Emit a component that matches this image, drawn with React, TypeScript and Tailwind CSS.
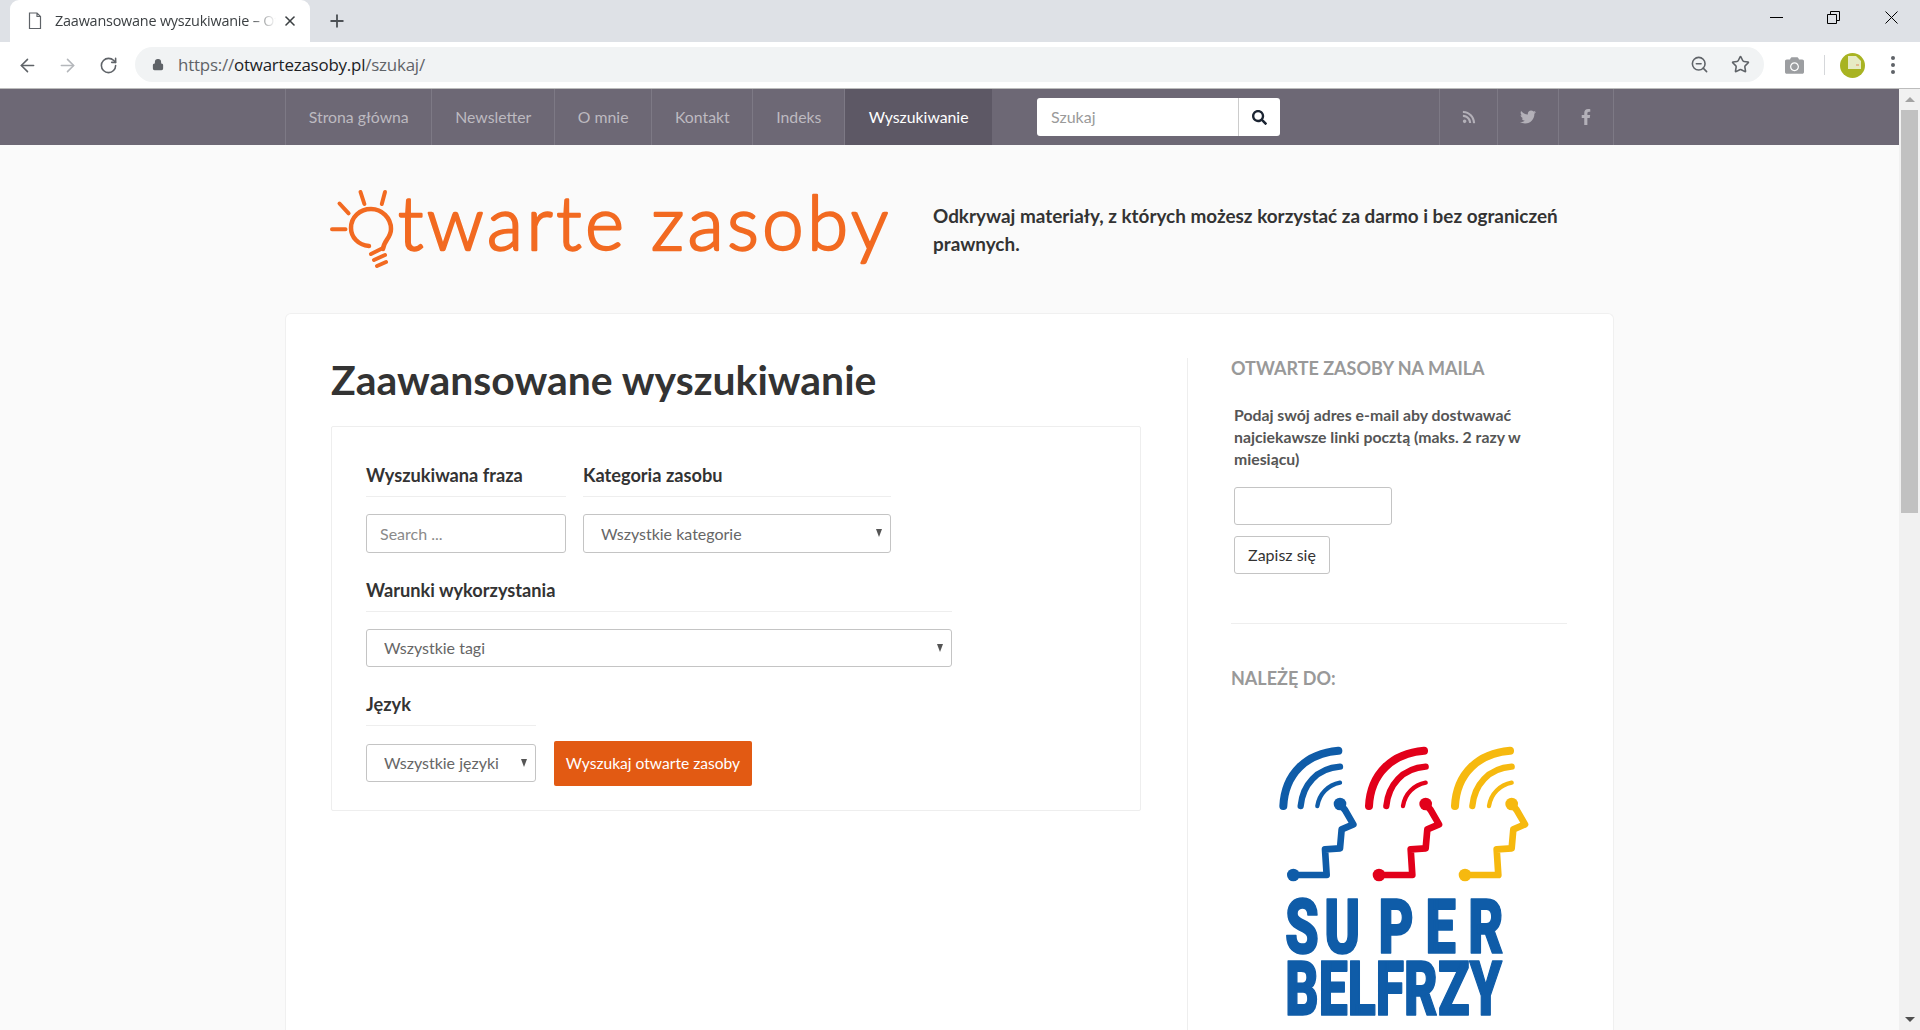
import { ArrowLeft, ArrowRight, Lock, Plus, RotateCw, Star, X, ZoomOut } from "lucide-react"
import { FaCamera, FaFacebookF, FaRss, FaSearch, FaTwitter } from "react-icons/fa"

const navItems = ["Strona główna", "Newsletter", "O mnie", "Kontakt", "Indeks"]

function Head({ color, dx }: { color: string; dx: number }) {
  return (
    <g transform={`translate(${dx} 0)`} fill="none" stroke={color} strokeLinecap="round" strokeLinejoin="round">
      <path d="M70 228C75 130 140 70 235 62" strokeWidth="24" />
      <path d="M122 228C128 165 170 115 240 110" strokeWidth="19" />
      <path d="M172 228C178 190 205 165 240 158" strokeWidth="13" />
      <path d="M240 222L255 240L280 283L245 298L240 355L195 358L200 435H100" strokeWidth="20" />
      <circle cx="240" cy="222" r="19" fill={color} stroke="none" />
      <circle cx="100" cy="435" r="19" fill={color} stroke="none" />
    </g>
  )
}

function SuperBelfrzy() {
  return (
    <svg viewBox="0 0 870 900" className="w-[290px] h-[300px] block">
      <Head color="#0f5ca8" dx={0} />
      <Head color="#e2001a" dx={257} />
      <Head color="#f6b90f" dx={515} />
      <g fontFamily="Roboto, sans-serif" fontWeight="900" fontSize="226" fill="#0f5ca8" stroke="#0f5ca8" strokeWidth="5" strokeLinejoin="round">
        <text transform="translate(0 670) scale(0.72 1)" x="104 268 494 690 868" y="0">SUPER</text>
        <text x="76" y="856" textLength="650" lengthAdjust="spacingAndGlyphs">BELFRZY</text>
      </g>
    </svg>
  )
}

function Logo() {
  return (
    <svg viewBox="330 185 565 90" className="w-[565px] h-[90px] block shrink-0">
      <g fill="none" stroke="#f26a21" strokeWidth="4.5" strokeLinecap="round">
        <path d="M369 246C358 245 351 237 351 228C351 217 360 209 371 209C382 209 391 218 391 229C391 238 384 240 383 249" />
        <path d="M360.5 192L364.4 204M385 192L381.8 204M339.5 203.5L348.6 213.3M332 229.3H345.5" strokeWidth="4" />
        <path d="M371 254L383 248M374 260L385 255M377 266L386 262" strokeWidth="4" />
      </g>
      <text x="398" y="250" textLength="490" fontFamily="Lato, sans-serif" fontWeight="300" fontSize="74" fill="#f26a21" stroke="#f26a21" strokeWidth="2.4" strokeLinejoin="round">twarte zasoby</text>
    </svg>
  )
}

function Field({ title, className }: { title: string; className: string }) {
  return (
    <div className={`h-[38px] border-b border-[#eeeeee] text-[18.2px] font-bold leading-[32px] text-[#333333] ${className}`}>
      {title}
    </div>
  )
}

function Select({ label, className }: { label: string; className: string }) {
  return (
    <div className={`relative ${className}`}>
      <select className="w-full h-full appearance-none rounded-[3px] border border-[#c4c4c4] bg-white pl-[17px] text-[16px] text-[#666666] outline-none">
        <option>{label}</option>
      </select>
      <span className="absolute right-[9px] top-[15px] h-0 w-0 border-x-[3.5px] border-t-[8px] border-x-transparent border-t-[#555555]" />
    </div>
  )
}

export default function App() {
  return (
    <div className="h-[1030px] overflow-hidden flex flex-col bg-white font-['Lato',sans-serif]">
      {/* browser chrome */}
      <div className="h-[42px] shrink-0 bg-[#dee1e6] flex items-end pl-[10px] relative">
        <div className="w-[300px] h-[42px] bg-white rounded-t-[9px] flex items-center pl-[18px] font-['Open_Sans',sans-serif] text-[14.4px] text-[#3c4043]">
          <svg viewBox="0 0 14 18" className="w-[14px] h-[18px] shrink-0" fill="none" stroke="#5f6368" strokeWidth="1.2">
            <path d="M1.5 1H9L12.5 4.5V16.5H1.5ZM9 1V4.5H12.5" />
          </svg>
          <span className="ml-[13px] w-[221px] overflow-hidden whitespace-nowrap tracking-[-0.2px] [mask-image:linear-gradient(to_right,black_88%,transparent)]">
            Zaawansowane wyszukiwanie – Otwarte zasoby
          </span>
          <X className="w-[16px] h-[16px] ml-[6px] text-[#3c4043]" strokeWidth={2.4} />
        </div>
        <Plus className="w-[20px] h-[20px] ml-[17px] mb-[11px] text-[#4d5156]" strokeWidth={2.2} />
        <div className="ml-auto h-[35px] self-start flex items-center text-black">
          <span className="block w-[13px] h-px bg-black mr-[44px]" />
          <svg viewBox="0 0 13 13" className="w-[13px] h-[13px] mr-[45px]" fill="none" stroke="black">
            <path d="M.5 3.5H9.5V12.5H.5ZM3.5 3.5V.5H12.5V9.5H9.5" />
          </svg>
          <svg viewBox="0 0 13 13" className="w-[13px] h-[13px] mr-[22px]" fill="none" stroke="black">
            <path d="M.5.5L12.5 12.5M12.5.5L.5 12.5" />
          </svg>
        </div>
      </div>
      <div className="h-[47px] shrink-0 bg-white border-b border-[#bcbcbc] flex items-center">
        <ArrowLeft className="w-[21px] h-[21px] ml-[17px] text-[#5f6368]" strokeWidth={1.8} />
        <ArrowRight className="w-[21px] h-[21px] ml-[19px] text-[#b4b7bb]" strokeWidth={1.8} />
        <RotateCw className="w-[19px] h-[19px] ml-[21px] text-[#5f6368]" strokeWidth={2} />
        <div className="ml-[17px] w-[1629px] h-[35px] mb-[1px] rounded-full bg-[#f1f3f4] flex items-center">
          <Lock className="ml-[17px] w-[12px] h-[13px] text-[#5f6368] fill-[#5f6368]" strokeWidth={2.5} />
          <span className="ml-[14px] font-['Open_Sans',sans-serif] text-[16.9px] tracking-[-0.2px] text-[#5f6368]">
            https://<span className="text-[#202124]">otwartezasoby.pl</span>/szukaj/
          </span>
          <ZoomOut className="ml-auto w-[19px] h-[19px] text-[#5f6368]" strokeWidth={2} />
          <Star className="ml-[22px] mr-[14px] w-[19px] h-[19px] text-[#5f6368]" strokeWidth={2} />
        </div>
        <FaCamera className="ml-[21px] w-[19px] h-[19px] text-[#9c9ea1]" />
        <span className="ml-[20px] w-px h-[20px] bg-[#d5d7da]" />
        <svg viewBox="0 0 25 25" className="ml-[15px] w-[25px] h-[25px]">
          <circle cx="12.5" cy="12.5" r="12.5" fill="#a8b322" />
          <path d="M8 3H16L21 8V16H8Z" fill="#e6ebc4" />
          <path d="M16 12H19" stroke="#e08a5a" strokeWidth="1" />
        </svg>
        {/* kebab */}
        <span className="ml-[26px] flex flex-col gap-[3px]">
          <span className="w-[4px] h-[4px] rounded-full bg-[#5f6368]" />
          <span className="w-[4px] h-[4px] rounded-full bg-[#5f6368]" />
          <span className="w-[4px] h-[4px] rounded-full bg-[#5f6368]" />
        </span>
      </div>

      <div className="flex-1 flex min-h-0">
        {/* page */}
        <div className="flex-1 min-w-0 flex flex-col bg-[#fafafa]">
          <div className="h-[56px] shrink-0 bg-[#6d6875]">
            <div className="mx-auto w-[1329px] h-full flex text-[15.8px] text-[#bdbac0]">
              {navItems.map((item) => (
                <a key={item} className="h-full px-[22.75px] flex items-center border-l border-[#7d7985]">{item}</a>
              ))}
              <a className="h-full px-[23.5px] flex items-center border-l border-[#7d7985] bg-[#5d5865] text-white">Wyszukiwanie</a>
              <div className="ml-[45px] mt-[9px] w-[243px] h-[38px] flex rounded-[3px] bg-white overflow-hidden">
                <input placeholder="Szukaj" className="flex-1 min-w-0 pl-[14px] text-[16px] outline-none placeholder:text-[#9a9a9a]" />
                <button className="w-[42px] border-l border-[#cccccc] flex items-center justify-center">
                  <FaSearch className="w-[15px] h-[15px] text-[#1c2533]" />
                </button>
              </div>
              <div className="ml-auto flex border-r border-[#7d7985] text-[#b3b0b8]">
                <span className="w-[58px] border-l border-[#7d7985] flex items-center justify-center"><FaRss className="w-[14px] h-[14px]" /></span>
                <span className="w-[61px] border-l border-[#7d7985] flex items-center justify-center"><FaTwitter className="w-[16px] h-[16px]" /></span>
                <span className="w-[55px] border-l border-[#7d7985] flex items-center justify-center"><FaFacebookF className="w-[16px] h-[16px]" /></span>
              </div>
            </div>
          </div>

          <div className="mx-auto w-[1329px] flex-1 min-h-0 flex flex-col">
            <div className="h-[168px] shrink-0 flex pl-[45px] pt-[40px]">
              <Logo />
              <p className="ml-[38px] mt-[17px] w-[640px] text-[18.9px] font-bold leading-[28px] text-[#333333]">
                Odkrywaj materiały, z których możesz korzystać za darmo i bez ograniczeń prawnych.
              </p>
            </div>

            <div className="flex-1 min-h-0 flex rounded-t-[6px] border border-b-0 border-[#f0f0f0] bg-white">
              <main className="w-[901px] pl-[45px] pr-[45px]">
                <h1 className="mt-[36px] text-[40.9px] font-bold leading-[60px] text-[#333333]">Zaawansowane wyszukiwanie</h1>
                <form className="mt-[16px] w-[810px] border border-[#eeeeee] rounded-[2px] pl-[34px] pt-[32px] pb-[28px]">
                  <div className="flex gap-[17px]">
                    <div className="w-[200px]">
                      <Field title="Wyszukiwana fraza" className="w-full" />
                      <input placeholder="Search ..." className="mt-[17px] w-full h-[39px] rounded-[3px] border border-[#c4c4c4] pl-[13px] text-[16px] outline-none placeholder:text-[#8a8a8a]" />
                    </div>
                    <div className="w-[308px]">
                      <Field title="Kategoria zasobu" className="w-full" />
                      <Select label="Wszystkie kategorie" className="mt-[17px] h-[39px]" />
                    </div>
                  </div>
                  <div className="mt-[21px] w-[586px]">
                    <Field title="Warunki wykorzystania" className="w-full" />
                    <Select label="Wszystkie tagi" className="mt-[17px] h-[38px]" />
                  </div>
                  <div className="mt-[21px] flex">
                    <div className="w-[170px]">
                      <Field title="Język" className="w-full" />
                      <Select label="Wszystkie języki" className="mt-[18px] h-[38px]" />
                    </div>
                    <button type="button" className="ml-[18px] self-end mb-[-4px] w-[198px] h-[45px] rounded-[2px] bg-[#e25a13] text-[15.6px] text-white">
                      Wyszukaj otwarte zasoby
                    </button>
                  </div>
                </form>
              </main>

              <aside className="mt-[44px] w-[381px] border-l border-[#eeeeee] pl-[43px] overflow-hidden">
                <h2 className="mt-[-1px] text-[18px] font-bold leading-[22px] text-[#999999] whitespace-nowrap">OTWARTE ZASOBY NA MAILA</h2>
                <div className="pl-[3px]">
                  <p className="mt-[25px] w-[320px] text-[15.8px] font-bold leading-[22px] text-[#555555]">
                    Podaj swój adres e-mail aby dostwawać<br />najciekawsze linki pocztą (maks. 2 razy w<br />miesiącu)
                  </p>
                  <input className="mt-[17px] block w-[158px] h-[38px] rounded-[3px] border border-[#c4c4c4] outline-none" />
                  <button className="mt-[11px] block w-[96px] h-[38px] rounded-[3px] border border-[#c4c4c4] bg-white text-[16px] text-[#333333]">
                    Zapisz się
                  </button>
                </div>
                <hr className="mt-[49px] w-[336px] border-[#eeeeee]" />
                <h2 className="mt-[43px] text-[18px] font-bold leading-[22px] text-[#999999]">NALEŻĘ DO:</h2>
                <div className="ml-[29px] mt-[41px]">
                  <SuperBelfrzy />
                </div>
              </aside>
            </div>
          </div>
        </div>

        {/* scrollbar */}
        <div className="w-[21px] shrink-0 bg-[#f1f1f1] flex flex-col items-center">
          <span className="mt-[8px] h-0 w-0 border-x-[5px] border-b-[5px] border-x-transparent border-b-[#a3a3a3]" />
          <span className="mt-[8px] w-[17px] h-[403px] bg-[#c1c1c1]" />
          <span className="mt-auto mb-[8px] h-0 w-0 border-x-[5px] border-t-[5px] border-x-transparent border-t-[#505050]" />
        </div>
      </div>
    </div>
  )
}
